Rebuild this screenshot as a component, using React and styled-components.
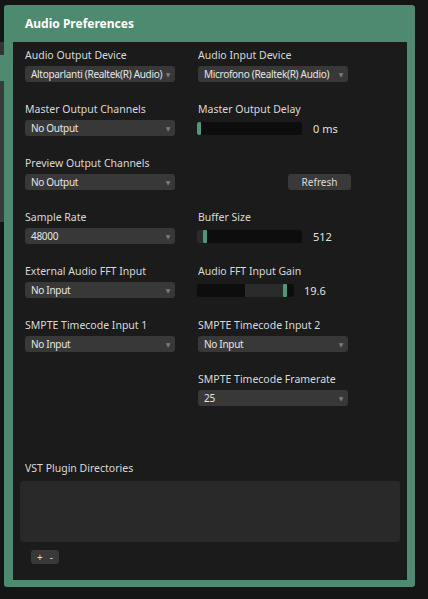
import React from "react";
import styled, { createGlobalStyle } from "styled-components";

const GlobalStyle = createGlobalStyle`
  body {
    margin: 0;
    background: #151515;
    font-family: "Noto Sans", "DejaVu Sans", sans-serif;
    -webkit-font-smoothing: antialiased;
  }
`;

const Page = styled.div`
  position: relative;
  height: 599px;
  box-sizing: border-box;
  padding: 5px 0 0 4px;
  overflow: hidden;
`;

// the bit of another panel peeking out at the left edge
const BehindStrip = styled.div`
  position: absolute;
  left: 0;
  top: 42px;
  width: 4px;
  height: 180px;
  background: linear-gradient(
    #333 0 13px,
    #4e8a70 13px 39px,
    #3a3a3a 39px 100%
  );
`;

const Window = styled.div`
  position: relative;
  width: 411px;
  height: 582px;
  box-sizing: border-box;
  background: #4e8a70;
  border-radius: 3px;
  padding: 0 8px 7px 9px;
  display: flex;
  flex-direction: column;
`;

const TitleBar = styled.div`
  height: 37px;
  flex: none;
  display: flex;
  align-items: center;
  padding-left: 12px;
  color: #fff;
  font-weight: 700;
  font-size: 12px;
`;

const Panel = styled.div`
  flex: 1;
  background: #1b1b1b;
  padding: 6px 0 0 12px;
  display: flex;
  flex-direction: column;
`;

const Grid = styled.div`
  display: grid;
  grid-template-columns: 150px 150px;
  column-gap: 23px;
  grid-auto-rows: 54px;
`;

const Field = styled.div`
  display: flex;
  flex-direction: column;
`;

const Label = styled.div`
  height: 14px;
  line-height: 14px;
  font-size: 10.5px;
  color: #d9d9d9;
  margin-bottom: 4px;
  white-space: nowrap;
`;

const SelectBox = styled.div`
  width: 150px;
  height: 16px;
  box-sizing: border-box;
  background: #383838;
  border-radius: 3px;
  padding: 0 5px 0 6px;
  display: flex;
  align-items: center;
  justify-content: space-between;
  font-size: 10px;
  letter-spacing: -0.3px;
  color: #e6e6e6;
  white-space: nowrap;
`;

const Arrow = styled.span`
  font-size: 6px;
  color: #7c7c7c;
  line-height: 1;
  margin-top: 2px;
`;

const SliderRow = styled.div`
  height: 16px;
  display: flex;
  align-items: center;
  margin-left: -1px;
`;

const Track = styled.div`
  position: relative;
  width: ${({ $width }) => $width}px;
  height: 13px;
  background: #0d0d0d;
  border-radius: 2px;
  overflow: hidden;
`;

const Fill = styled.div`
  position: absolute;
  top: 0;
  bottom: 0;
  background: #2b2b2b;
`;

const Handle = styled.div`
  position: absolute;
  top: 0;
  bottom: 0;
  width: 4px;
  background: #4e9a78;
  border-radius: 1px;
`;

const Value = styled.span`
  margin-left: ${({ $gap }) => $gap}px;
  font-size: 11px;
  color: #e0e0e0;
`;

const ButtonCell = styled.div`
  display: flex;
  flex-direction: column;
  padding-top: 18px;
`;

const Button = styled.div`
  height: 16px;
  box-sizing: border-box;
  background: #393939;
  border-radius: 3px;
  display: flex;
  align-items: center;
  justify-content: center;
  font-size: 10px;
  color: #dcdcdc;
  width: ${({ $width }) => $width}px;
  margin-left: ${({ $offset }) => $offset || 0}px;
`;

const VstLabel = styled(Label)`
  margin-top: 35px;
  margin-bottom: 6px;
`;

const ListBox = styled.div`
  width: 380px;
  height: 61px;
  margin-left: -5px;
  background: #292929;
  border-radius: 3px;
`;

const SmallButton = styled(Button)`
  height: 14px;
  margin-top: 8px;
  margin-left: 6px;
  gap: 7px;
  font-size: 10px;
`;

const Select = ({ value }) => (
  <SelectBox>
    <span>{value}</span>
    <Arrow>▼</Arrow>
  </SelectBox>
);

const Slider = ({ width, fill, handle, value, gap }) => (
  <SliderRow>
    <Track $width={width}>
      {fill && <Fill style={{ left: fill[0], width: fill[1] - fill[0] }} />}
      <Handle style={{ left: handle }} />
    </Track>
    <Value $gap={gap}>{value}</Value>
  </SliderRow>
);

const SelectField = ({ label, value }) => (
  <Field>
    <Label>{label}</Label>
    <Select value={value} />
  </Field>
);

const SliderField = ({ label, ...rest }) => (
  <Field>
    <Label>{label}</Label>
    <Slider {...rest} />
  </Field>
);

export default function App() {
  return (
    <>
      <GlobalStyle />
      <Page>
        <BehindStrip />
        <Window>
          <TitleBar>Audio Preferences</TitleBar>
          <Panel>
            <Grid>
              <SelectField
                label="Audio Output Device"
                value="Altoparlanti (Realtek(R) Audio)"
              />
              <SelectField
                label="Audio Input Device"
                value="Microfono (Realtek(R) Audio)"
              />
              <SelectField label="Master Output Channels" value="No Output" />
              <SliderField
                label="Master Output Delay"
                width={105}
                handle={0}
                value="0 ms"
                gap={11}
              />
              <SelectField label="Preview Output Channels" value="No Output" />
              <ButtonCell>
                <Button $width={63} $offset={90}>
                  Refresh
                </Button>
              </ButtonCell>
              <SelectField label="Sample Rate" value="48000" />
              <SliderField
                label="Buffer Size"
                width={105}
                fill={[0, 6]}
                handle={6}
                value="512"
                gap={11}
              />
              <SelectField label="External Audio FFT Input" value="No Input" />
              <SliderField
                label="Audio FFT Input Gain"
                width={97}
                fill={[48, 86]}
                handle={86}
                value="19.6"
                gap={10}
              />
              <SelectField label="SMPTE Timecode Input 1" value="No Input" />
              <SelectField label="SMPTE Timecode Input 2" value="No Input" />
              <div />
              <SelectField label="SMPTE Timecode Framerate" value="25" />
            </Grid>
            <VstLabel>VST Plugin Directories</VstLabel>
            <ListBox />
            <SmallButton $width={28}>
              <span>+</span>
              <span>-</span>
            </SmallButton>
          </Panel>
        </Window>
      </Page>
    </>
  );
}
